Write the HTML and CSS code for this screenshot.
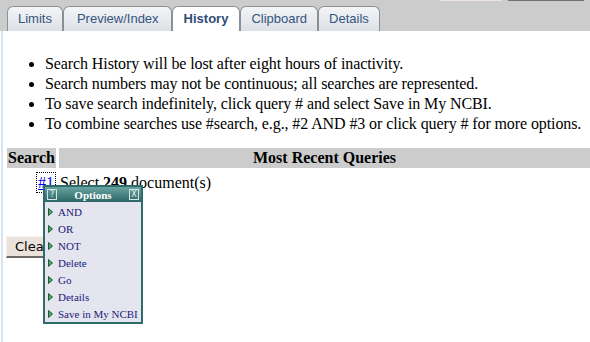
FILE: index.html
```html
<!DOCTYPE html>
<html lang="en">
<head>
    <meta charset="UTF-8">
    <title>History</title>
    <link rel="stylesheet" href="styles.css">
</head>
<body>
    <div class="topbar">
        <div class="remnants">
            <span class="rem-light"></span>
            <span class="rem-dark"></span>
        </div>
        <ul class="tabs">
            <li class="tab">Limits</li>
            <li class="tab wide">Preview/Index</li>
            <li class="tab active">History</li>
            <li class="tab">Clipboard</li>
            <li class="tab">Details</li>
        </ul>
    </div>

    <div class="page">
        <ul class="notes">
            <li>Search History will be lost after eight hours of inactivity.</li>
            <li>Search numbers may not be continuous; all searches are represented.</li>
            <li>To save search indefinitely, click query # and select Save in My NCBI.</li>
            <li>To combine searches use #search, e.g., #2 AND #3 or click query # for more options.</li>
        </ul>

        <table class="history">
            <tr>
                <th class="col-search">Search</th>
                <th>Most Recent Queries</th>
            </tr>
            <tr>
                <td class="num"><a href="#" class="query">#1</a></td>
                <td>Select <b>249</b> document(s)</td>
            </tr>
        </table>

        <button class="clear">Clear History</button>
    </div>

    <!-- Options popup for query #1 -->
    <div class="options">
        <div class="options-head">
            <span class="box-btn">?</span>
            <span class="options-title">Options</span>
            <span class="box-btn">X</span>
        </div>
        <ul class="options-list">
            <li><svg width="5" height="8" viewBox="0 0 5 8"><polygon points="0.5,0.5 4.5,4 0.5,7.5" fill="#4ea36a" stroke="#1d5a35"/></svg>AND</li>
            <li><svg width="5" height="8" viewBox="0 0 5 8"><polygon points="0.5,0.5 4.5,4 0.5,7.5" fill="#4ea36a" stroke="#1d5a35"/></svg>OR</li>
            <li><svg width="5" height="8" viewBox="0 0 5 8"><polygon points="0.5,0.5 4.5,4 0.5,7.5" fill="#4ea36a" stroke="#1d5a35"/></svg>NOT</li>
            <li><svg width="5" height="8" viewBox="0 0 5 8"><polygon points="0.5,0.5 4.5,4 0.5,7.5" fill="#4ea36a" stroke="#1d5a35"/></svg>Delete</li>
            <li><svg width="5" height="8" viewBox="0 0 5 8"><polygon points="0.5,0.5 4.5,4 0.5,7.5" fill="#4ea36a" stroke="#1d5a35"/></svg>Go</li>
            <li><svg width="5" height="8" viewBox="0 0 5 8"><polygon points="0.5,0.5 4.5,4 0.5,7.5" fill="#4ea36a" stroke="#1d5a35"/></svg>Details</li>
            <li><svg width="5" height="8" viewBox="0 0 5 8"><polygon points="0.5,0.5 4.5,4 0.5,7.5" fill="#4ea36a" stroke="#1d5a35"/></svg>Save in My NCBI</li>
        </ul>
    </div>
</body>
</html>
```

FILE: styles.css
```css
* {
    margin: 0;
    padding: 0;
    box-sizing: border-box;
}

body {
    font-family: 'Liberation Serif', 'Times New Roman', serif;
    font-size: 16px;
    background-color: #fff;
    color: #000;
    overflow: hidden;
}

/* Tab strip */
.topbar {
    background-color: #cccccc;
    height: 31px;
}

.remnants {
    display: flex;
    height: 1px;
    padding-left: 440px;
}

.rem-light {
    width: 62px;
    background-color: #efe4e0;
}

.rem-dark {
    width: 76px;
    margin-left: 6px;
    background-color: #77716d;
}

.tabs {
    list-style: none;
    display: flex;
    padding-left: 7px;
    margin-top: 5px;
}

.tab {
    height: 25px;
    line-height: 24px;
    padding: 0 10px;
    font-family: 'Liberation Sans', Arial, sans-serif;
    font-size: 13px;
    color: #35547f;
    background: linear-gradient(#f3f5f7, #dde1e6);
    border: 1px solid #8b9096;
    border-bottom: none;
    border-radius: 6px 6px 0 0;
}

.tab.wide {
    padding: 0 12px 0 13px;
}

.tab.active {
    background: #fff;
    font-weight: bold;
    color: #2f4c77;
    padding: 0 11px;
}

/* Main area */
.page {
    margin-left: 1px;
    border-left: 2px solid #d9e4f1;
    padding-left: 1px;
    height: 311px;
}

.notes {
    padding-top: 23px;
    padding-left: 41px;
    line-height: 20px;
}

.notes li {
    letter-spacing: -0.1px;
}

.history {
    margin-top: 11px;
    width: calc(100% + 3px);
    border-spacing: 3px;
}

.history th {
    background-color: #cccccc;
    padding: 1px;
    height: 20px;
}

.history .col-search {
    width: 49px;
}

.history td {
    padding: 3px 1px 1px;
    height: 22px;
}

.history .num {
    text-align: right;
    padding-right: 2px;
}

.query {
    color: #0000ee;
    outline: 1px dotted #000;
    outline-offset: 1px;
}

.clear {
    margin-top: 40px;
    margin-left: 2px;
    height: 22px;
    padding: 0 8px;
    font-family: 'DejaVu Sans', sans-serif;
    font-size: 13px;
    color: #000;
    background-color: #ece2dc;
    border: 1px solid;
    border-color: #f7efe9 #7b7571 #6e6864 #f7efe9;
    border-width: 1px 2px 2px 1px;
}

/* Options popup */
.options {
    position: absolute;
    left: 43px;
    top: 185px;
    width: 100px;
    border: 2px solid #2d6c6a;
    background-color: #e5e5ef;
}

.options-head {
    display: flex;
    align-items: center;
    justify-content: space-between;
    height: 15px;
    padding: 0 2px;
    background: linear-gradient(#6aa4a2, #2c6563);
}

.box-btn {
    width: 10px;
    height: 11px;
    border: 1px solid #d2e6e4;
    color: #e4f0ef;
    font-family: 'DejaVu Sans', sans-serif;
    font-size: 8px;
    line-height: 9px;
    text-align: center;
}

.options-title {
    color: #fff;
    font-weight: bold;
    font-size: 11px;
}

.options-list {
    list-style: none;
    padding-top: 1px;
}

.options-list li {
    display: flex;
    align-items: center;
    height: 17px;
    padding-left: 3px;
    font-size: 11px;
    color: #1b1b7a;
}

.options-list svg {
    margin-right: 5px;
}
```
